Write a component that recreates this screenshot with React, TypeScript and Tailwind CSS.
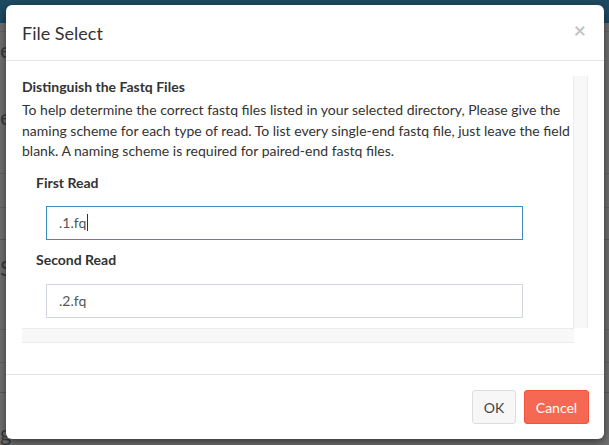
const font = { fontFamily: "Lato, 'Open Sans', sans-serif" };

function Backdrop() {
    // page behind the modal, dimmed by the overlay
    return (
        <div className="absolute inset-0 flex flex-col bg-[#6f6f6f] text-[22px] leading-[24px] text-[#3a3a3a]">
            <div className="h-[23px] bg-[#1d4a62]" />
            <div className="h-[9px] border-b border-[#626262]" />
            <div className="h-[144px] border-b border-[#626262]">
                <div className="pt-[6px]">e</div>
                <div className="pt-[43px]">e</div>
            </div>
            <div className="h-[34px] border-b border-[#626262]" />
            <div className="h-[32px] border-b border-[#5a5a5a]" />
            <div className="h-[91px] border-b border-[#626262]">
                <div className="pt-[16px]">Se</div>
            </div>
            <div className="h-[34px] border-b border-[#626262]" />
            <div className="h-[30px] border-b border-[#5a5a5a]" />
            <div className="flex-1 pt-[28px]">g</div>
        </div>
    );
}

export default function App() {
    return (
        <div className="relative h-[445px] w-[609px] overflow-hidden" style={font}>
            <Backdrop />

            <div className="absolute left-[6px] top-[5px] flex h-[434px] w-[598px] flex-col rounded-[6px] bg-white text-[#333] shadow-[0_3px_9px_rgba(0,0,0,0.5)]">
                <div className="flex h-[56px] items-center justify-between border-b border-[#e5e5e5] pl-[16px] pr-[18px]">
                    <h4 className="text-[18px] leading-[20px] text-[#333]">File Select</h4>
                    <span className="-mt-[6px] text-[21px] font-bold leading-none text-[#c4c4c4]">×</span>
                </div>

                <div className="px-[16px] pt-[15px]">
                    <div className="flex">
                        <div className="h-[252px] w-[552px] overflow-hidden">
                            <h5 className="pt-[1px] text-[14px] font-bold leading-[20px]">Distinguish the Fastq Files</h5>
                            <p className="mt-[3px] text-[14px] leading-[20.5px]">
                                To help determine the correct fastq files listed in your selected directory, Please give the naming scheme for each type of read. To list every single-end fastq file, just leave the field blank. A naming scheme is required for paired-end fastq files.
                            </p>
                            <div className="pl-[14px] pt-[11px]">
                                <label className="block text-[14px] font-bold leading-[20px]">First Read</label>
                                <div className="pl-[10px] pt-[13px]">
                                    <div className="flex h-[34px] w-[477px] items-center border border-[#3c8dbc] px-[12px] text-[14px] text-[#555]">
                                        .1.fq<span className="ml-px h-[17px] w-px bg-[#333]" />
                                    </div>
                                </div>
                                <label className="mt-[10px] block text-[14px] font-bold leading-[20px]">Second Read</label>
                                <div className="pl-[10px] pt-[14px]">
                                    <div className="flex h-[34px] w-[477px] items-center border border-[#d2d6de] px-[12px] text-[14px] text-[#555]">
                                        .2.fq
                                    </div>
                                </div>
                            </div>
                        </div>
                        <div className="h-[252px] w-[15px] border-x border-[#ececec] bg-[#f8f8f8]" />
                    </div>
                    <div className="h-[15px] w-[552px] border-y border-[#ececec] bg-[#f8f8f8]" />
                </div>

                <div className="mt-auto flex h-[65px] items-center justify-end gap-[8px] border-t border-[#e5e5e5] px-[15px]">
                    <button className="h-[34px] w-[44px] rounded-[3px] border border-[#dddddd] bg-[#f7f7f7] text-[14px] text-[#444]">OK</button>
                    <button className="h-[34px] w-[65px] rounded-[3px] border border-[#f4543c] bg-[#f56954] text-[14px] text-white">Cancel</button>
                </div>
            </div>
        </div>
    );
}
